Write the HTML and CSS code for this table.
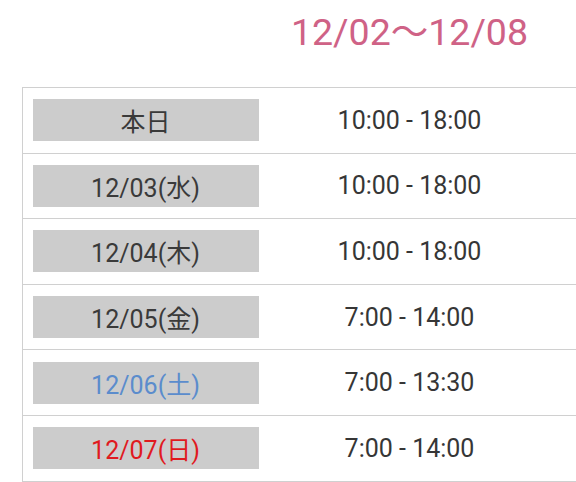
FILE: index.html
```html
<!DOCTYPE html>
<html lang="ja">
<head>
<meta charset="utf-8">
<link rel="stylesheet" href="styles.css">
</head>
<body>
<div class="page">
  <div class="head">
    <div class="head-spacer"></div>
    <h1 class="range">12/02〜12/08</h1>
  </div>
  <div class="table">
    <div class="row"><div class="day"><span class="badge">本日</span></div><div class="time">10:00 - 18:00</div></div>
    <div class="row"><div class="day"><span class="badge">12/03(水)</span></div><div class="time">10:00 - 18:00</div></div>
    <div class="row"><div class="day"><span class="badge">12/04(木)</span></div><div class="time">10:00 - 18:00</div></div>
    <div class="row"><div class="day"><span class="badge">12/05(金)</span></div><div class="time">7:00 - 14:00</div></div>
    <div class="row"><div class="day"><span class="badge sat">12/06(土)</span></div><div class="time">7:00 - 13:30</div></div>
    <div class="row"><div class="day"><span class="badge sun">12/07(日)</span></div><div class="time">7:00 - 14:00</div></div>
  </div>
</div>
</body>
</html>
```
FILE: styles.css
```css
html, body {
  margin: 0;
  padding: 0;
  background: #ffffff;
  overflow: hidden;
}
body {
  font-family: Roboto, "Noto Sans CJK JP", sans-serif;
  color: #333333;
}
.page {
  width: 576px;
  height: 482px;
}
.head {
  display: grid;
  grid-template-columns: 269px 281px;
  height: 87px;
}
.range {
  margin: 14px 0 0;
  font-size: 37.5px;
  line-height: 37px;
  font-weight: 400;
  color: #cf6286;
  text-align: center;
  white-space: nowrap;
}
.table {
  margin-left: 22px;
  border-left: 1.5px solid #d0d0d0;
  border-top: 1.5px solid #d0d0d0;
}
.row {
  display: grid;
  grid-template-columns: 246px 281px;
  align-items: center;
  padding: 11.3px 0;
  border-bottom: 1.5px solid #d0d0d0;
}
.day {
  padding-left: 9.5px;
}
.badge {
  display: flex;
  align-items: center;
  justify-content: center;
  width: 226px;
  height: 42px;
  background: #cccccc;
  font-size: 25px;
  color: #3a3a3a;
}
.badge.sat { color: #5b8ccc; }
.badge.sun { color: #e01a1f; }
.time {
  text-align: center;
  font-size: 25px;
  color: #363636;
}
```
